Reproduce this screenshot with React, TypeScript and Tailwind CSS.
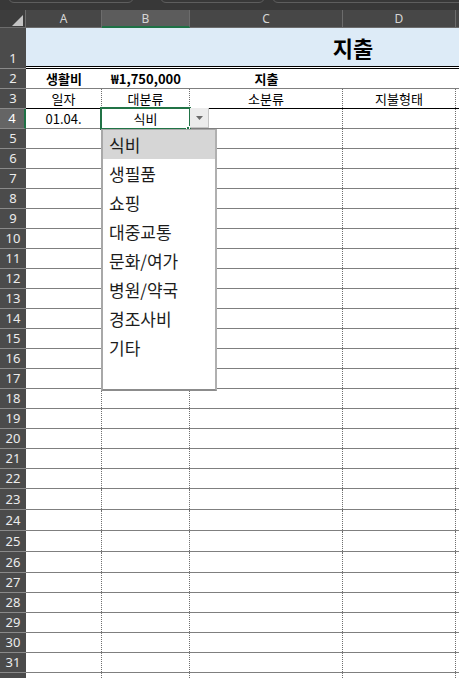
import React from "react";

const bodyHeights: Record<number, number> = { 23: 21, 24: 21, 25: 21, 26: 21 };

function RowHead({ n, sel, className = "" }: { n: number | null; sel?: boolean; className?: string }) {
  return (
    <div
      className={`w-[26px] shrink-0 flex justify-center border-b border-[#8a8a8a] text-[13px] leading-none font-['Noto_Sans',sans-serif] ${
        sel ? "bg-[#656565] border-r-2 border-r-[#1e7145] text-white" : "bg-[#4b4b4b] text-[#ececec]"
      } ${className}`}
    >
      {n}
    </div>
  );
}

function DataRow({ n, h }: { n: number; h: number }) {
  return (
    <div className="flex shrink-0" style={{ height: h }}>
      <RowHead n={n > 31 ? null : n} className="items-center" />
      <div className="flex-1 flex border-b border-[#7f7f7f]">
        <div className="w-[76px] shrink-0 border-r border-dotted border-[#6f6f6f]" />
        <div className="w-[88px] shrink-0 border-r border-dotted border-[#6f6f6f]" />
        <div className="w-[153px] shrink-0 border-r border-dotted border-[#6f6f6f]" />
        <div className="w-[113px] shrink-0 border-r border-dotted border-[#6f6f6f]" />
        <div className="flex-1" />
      </div>
    </div>
  );
}

const items = ["식비", "생필품", "쇼핑", "대중교통", "문화/여가", "병원/약국", "경조사비", "기타"];

export default function App() {
  const body = Array.from({ length: 28 }, (_, i) => i + 5);
  return (
    <div className="relative w-[459px] h-[678px] overflow-hidden bg-white font-['Noto_Sans_CJK_KR','Noto_Sans',sans-serif] text-black">
      {/* top strip with bottoms of name box / formula bar */}
      <div className="h-[10px] bg-[#383838] flex items-start overflow-hidden pl-[8px]">
        <div className="w-[126px] h-[13px] -mt-[10px] rounded-[6px] border border-[#5e5e5e] shrink-0" />
        <div className="ml-[26px] w-[105px] h-[13px] -mt-[10px] rounded-[6px] border border-[#5e5e5e] shrink-0" />
        <div className="ml-[7px] w-[220px] h-[13px] -mt-[10px] rounded-[6px] border border-[#5e5e5e] shrink-0" />
      </div>

      {/* column headers */}
      <div className="flex h-[18px] bg-[#474747] text-[#d6d6d6] text-[12px] leading-none font-['Noto_Sans',sans-serif]">
        <div className="w-[26px] shrink-0 bg-[#3d3d3d] border-r border-b border-[#6c6c6c] flex items-end justify-end pr-[2px] pb-[1px]">
          <svg width="11" height="11" viewBox="0 0 11 11">
            <polygon points="11,0 11,11 0,11" fill="#c4c4c4" />
          </svg>
        </div>
        <div className="w-[76px] shrink-0 border-r border-b border-[#6c6c6c] flex items-center justify-center">A</div>
        <div className="w-[88px] shrink-0 border-r border-r-[#6c6c6c] border-b-2 border-b-[#1e7145] bg-[#5c5c5c] flex items-center justify-center pt-[1px]">
          B
        </div>
        <div className="w-[153px] shrink-0 border-r border-b border-[#6c6c6c] flex items-center justify-center">C</div>
        <div className="w-[113px] shrink-0 border-r border-b border-[#6c6c6c] flex items-center justify-center">D</div>
        <div className="flex-1 border-b border-[#6c6c6c]" />
      </div>

      {/* row 1 title */}
      <div className="flex h-[41px]">
        <RowHead n={1} className="items-end pb-[3px]" />
        <div className="flex-1 bg-[#ddebf7] bg-clip-padding border-b-[3px] border-double border-black overflow-hidden">
          <div className="w-[654px] h-full flex items-center justify-center text-[22px] font-bold leading-none">
            지출
          </div>
        </div>
      </div>

      {/* row 2 */}
      <div className="flex h-[20px]">
        <RowHead n={2} className="items-center" />
        <div className="flex-1 flex border-b border-[#7f7f7f] text-[13px] font-bold leading-none">
          <div className="w-[76px] shrink-0 flex items-center justify-center">생활비</div>
          <div className="w-[88px] shrink-0 flex items-center justify-center">₩1,750,000</div>
          <div className="w-[153px] shrink-0 flex items-center justify-center">지출</div>
          <div className="flex-1" />
        </div>
      </div>

      {/* row 3 */}
      <div className="flex h-[20px]">
        <RowHead n={3} className="items-center" />
        <div className="flex-1 flex border-b border-black text-[13px] leading-none">
          <div className="w-[76px] shrink-0 border-r border-dotted border-[#6f6f6f] flex items-center justify-center">일자</div>
          <div className="w-[88px] shrink-0 border-r border-dotted border-[#6f6f6f] flex items-center justify-center">대분류</div>
          <div className="w-[153px] shrink-0 border-r border-dotted border-[#6f6f6f] flex items-center justify-center">소분류</div>
          <div className="w-[113px] shrink-0 border-r border-dotted border-[#6f6f6f] flex items-center justify-center">지불형태</div>
          <div className="flex-1" />
        </div>
      </div>

      {/* row 4 */}
      <div className="flex h-[20px]">
        <RowHead n={4} sel className="items-center" />
        <div className="flex-1 flex border-b border-[#7f7f7f] text-[13px] leading-none">
          <div className="w-[76px] shrink-0 border-r border-dotted border-[#6f6f6f] flex items-center justify-center">01.04.</div>
          <div className="w-[88px] shrink-0 border-r border-dotted border-[#6f6f6f] flex items-center justify-center">식비</div>
          <div className="w-[153px] shrink-0 border-r border-dotted border-[#6f6f6f]" />
          <div className="w-[113px] shrink-0 border-r border-dotted border-[#6f6f6f]" />
          <div className="flex-1" />
        </div>
      </div>

      {body.map((n) => (
        <DataRow key={n} n={n} h={bodyHeights[n] ?? 20} />
      ))}

      {/* selection border on B4 */}
      <div className="absolute left-[100px] top-[107px] w-[91px] h-[23px] border-2 border-[#217346]" />
      <div className="absolute left-[186px] top-[126px] w-[4px] h-[4px] bg-[#217346] border border-white" />

      {/* dropdown button */}
      <div className="absolute left-[190px] top-[108px] w-[19px] h-[20px] bg-[#ececec] border-r border-b border-[#c4c4c4] flex items-center justify-center">
        <svg width="7" height="4" viewBox="0 0 7 4">
          <polygon points="0,0 7,0 3.5,4" fill="#6a6a6a" />
        </svg>
      </div>

      {/* dropdown list */}
      <div className="absolute left-[101px] top-[129px] w-[116px] h-[262px] bg-white border border-l-2 border-[#a8a8a8] border-r-2 border-b-2 border-r-[#b0b0b0] border-b-[#8c8c8c]">
        {items.map((t, i) => (
          <div
            key={t}
            className={`h-[29px] pl-[6px] flex items-center text-[17px] leading-none text-[#1c1c1c] ${
              i === 0 ? "bg-[#d6d6d6]" : ""
            }`}
          >
            {t}
          </div>
        ))}
      </div>
    </div>
  );
}
